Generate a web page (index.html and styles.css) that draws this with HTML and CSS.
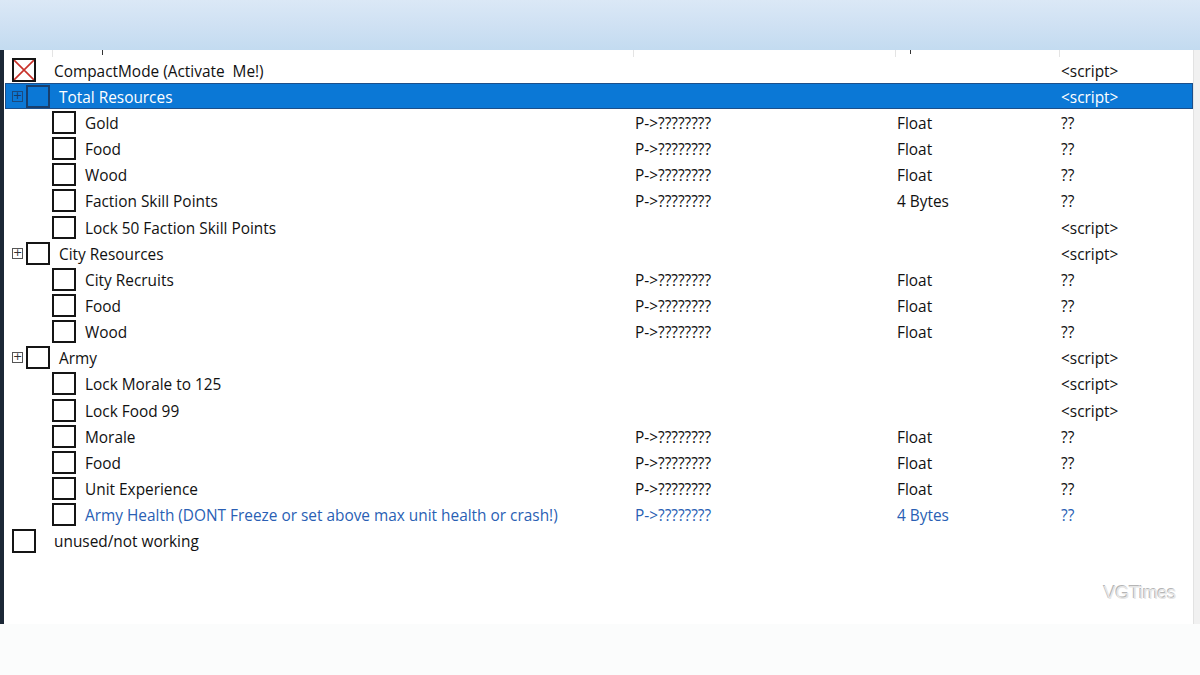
FILE: index.html
```html
<!DOCTYPE html>
<html>
<head>
<meta charset="utf-8">
<link rel="stylesheet" href="styles.css">
</head>
<body>
<div class="top"></div>
<div class="main">
  <div class="edge-left"></div>
  <div class="panel">
    <div class="header">
      <div class="hc c1"><span class="gutter"></span><span class="tick t1"></span></div>
      <div class="hc c2"></div>
      <div class="hc c3"><span class="tick t3"></span></div>
      <div class="hc c4"></div>
    </div>
    <div class="rows">
      <div class="row">
        <div class="c1 top-level"><span class="cb crossed"><svg viewBox="0 0 20 20" preserveAspectRatio="none"><path d="M0 0L20 20M20 0L0 20" stroke="#c8312a" stroke-width="1.6"/></svg></span><span class="label">CompactMode (Activate&nbsp; Me!)</span></div>
        <div class="c2"></div><div class="c3"></div><div class="c4">&lt;script&gt;</div>
      </div>
      <div class="row selected">
        <div class="c1 group"><span class="exp">+</span><span class="cb"></span><span class="label">Total Resources</span></div>
        <div class="c2"></div><div class="c3"></div><div class="c4">&lt;script&gt;</div>
      </div>
      <div class="row">
        <div class="c1 child"><span class="cb"></span><span class="label">Gold</span></div>
        <div class="c2">P-&gt;????????</div><div class="c3">Float</div><div class="c4">??</div>
      </div>
      <div class="row">
        <div class="c1 child"><span class="cb"></span><span class="label">Food</span></div>
        <div class="c2">P-&gt;????????</div><div class="c3">Float</div><div class="c4">??</div>
      </div>
      <div class="row">
        <div class="c1 child"><span class="cb"></span><span class="label">Wood</span></div>
        <div class="c2">P-&gt;????????</div><div class="c3">Float</div><div class="c4">??</div>
      </div>
      <div class="row">
        <div class="c1 child"><span class="cb"></span><span class="label">Faction Skill Points</span></div>
        <div class="c2">P-&gt;????????</div><div class="c3">4 Bytes</div><div class="c4">??</div>
      </div>
      <div class="row">
        <div class="c1 child"><span class="cb"></span><span class="label">Lock 50 Faction Skill Points</span></div>
        <div class="c2"></div><div class="c3"></div><div class="c4">&lt;script&gt;</div>
      </div>
      <div class="row">
        <div class="c1 group"><span class="exp">+</span><span class="cb"></span><span class="label">City Resources</span></div>
        <div class="c2"></div><div class="c3"></div><div class="c4">&lt;script&gt;</div>
      </div>
      <div class="row">
        <div class="c1 child"><span class="cb"></span><span class="label">City Recruits</span></div>
        <div class="c2">P-&gt;????????</div><div class="c3">Float</div><div class="c4">??</div>
      </div>
      <div class="row">
        <div class="c1 child"><span class="cb"></span><span class="label">Food</span></div>
        <div class="c2">P-&gt;????????</div><div class="c3">Float</div><div class="c4">??</div>
      </div>
      <div class="row">
        <div class="c1 child"><span class="cb"></span><span class="label">Wood</span></div>
        <div class="c2">P-&gt;????????</div><div class="c3">Float</div><div class="c4">??</div>
      </div>
      <div class="row">
        <div class="c1 group"><span class="exp">+</span><span class="cb"></span><span class="label">Army</span></div>
        <div class="c2"></div><div class="c3"></div><div class="c4">&lt;script&gt;</div>
      </div>
      <div class="row">
        <div class="c1 child"><span class="cb"></span><span class="label">Lock Morale to 125</span></div>
        <div class="c2"></div><div class="c3"></div><div class="c4">&lt;script&gt;</div>
      </div>
      <div class="row">
        <div class="c1 child"><span class="cb"></span><span class="label">Lock Food 99</span></div>
        <div class="c2"></div><div class="c3"></div><div class="c4">&lt;script&gt;</div>
      </div>
      <div class="row">
        <div class="c1 child"><span class="cb"></span><span class="label">Morale</span></div>
        <div class="c2">P-&gt;????????</div><div class="c3">Float</div><div class="c4">??</div>
      </div>
      <div class="row">
        <div class="c1 child"><span class="cb"></span><span class="label">Food</span></div>
        <div class="c2">P-&gt;????????</div><div class="c3">Float</div><div class="c4">??</div>
      </div>
      <div class="row">
        <div class="c1 child"><span class="cb"></span><span class="label">Unit Experience</span></div>
        <div class="c2">P-&gt;????????</div><div class="c3">Float</div><div class="c4">??</div>
      </div>
      <div class="row blue">
        <div class="c1 child"><span class="cb"></span><span class="label">Army Health (DONT Freeze or set above max unit health or crash!)</span></div>
        <div class="c2">P-&gt;????????</div><div class="c3">4 Bytes</div><div class="c4">??</div>
      </div>
      <div class="row">
        <div class="c1 top-level"><span class="cb"></span><span class="label">unused/not working</span></div>
        <div class="c2"></div><div class="c3"></div><div class="c4"></div>
      </div>
    </div>
    <div class="filler">
      <span class="watermark">VGTimes</span>
    </div>
  </div>
  <div class="edge-right"></div>
</div>
<div class="bottom"></div>
</body>
</html>
```

FILE: styles.css
```css
html, body {
  margin: 0;
  padding: 0;
}
body {
  width: 1200px;
  height: 675px;
  overflow: hidden;
  background: #fbfcfc;
  font-family: "Open Sans", "Noto Sans", "Liberation Sans", sans-serif;
  font-size: 15.4px;
  color: #111;
}
.top {
  height: 50px;
  background: linear-gradient(180deg, #dbe8f6 0%, #cfe1f3 50%, #c3dbf0 100%);
}
.main {
  display: flex;
  height: 574px;
}
.edge-left {
  width: 4px;
  background: #1c2836;
}
.edge-right {
  width: 6px;
  background: #f1f1f1;
  border-left: 1px solid #e2e2e2;
}
.panel {
  flex: 1;
  background: #ffffff;
  display: flex;
  flex-direction: column;
}
.header {
  height: 7px;
  overflow: hidden;
  display: grid;
  grid-template-columns: 629px 262px 164px 1fr;
}
.hc {
  border-left: 1px solid #e4e4e4;
  display: flex;
  align-items: flex-start;
  height: 7px;
}
.hc.c1 {
  border-left: none;
}
.gutter {
  width: 48px;
  height: 7px;
  border-right: 1px solid #e4e4e4;
  flex: none;
}
.tick {
  display: block;
  width: 1px;
  height: 5px;
  background: #333;
  flex: none;
}
.t1 { margin-left: 49px; }
.t3 { margin-left: 14px; height: 4px; }
.rows {
  display: flex;
  flex-direction: column;
}
.row {
  display: grid;
  grid-template-columns: 629px 262px 164px 1fr;
  height: 26.16px;
  align-items: center;
  white-space: nowrap;
  box-sizing: border-box;
}
.row > div {
  padding-left: 2px;
  padding-top: 2px;
}
.row > .c1 {
  padding-left: 0;
  padding-top: 0;
  display: flex;
  align-items: center;
  height: 100%;
}
.label {
  padding-top: 2px;
}
.cb {
  width: 24px;
  height: 23px;
  box-sizing: border-box;
  border: 2px solid #151515;
  background: #fff;
  flex: none;
  display: block;
}
.cb svg {
  display: block;
  width: 100%;
  height: 100%;
}
.top-level .cb {
  margin-left: 8px;
  width: 24px;
  height: 24px;
}
.top-level .label {
  margin-left: 18px;
}
.group .exp {
  margin-left: 8px;
  width: 11px;
  height: 11px;
  box-sizing: border-box;
  border: 1px solid #555;
  font-size: 11px;
  line-height: 8px;
  text-align: center;
  color: #333;
  flex: none;
  font-family: "DejaVu Sans", sans-serif;
}
.group .cb {
  margin-left: 3px;
}
.group .label {
  margin-left: 9px;
}
.child .cb {
  margin-left: 48px;
}
.child .label {
  margin-left: 9px;
}
.row.selected {
  background: #0b78d6;
  color: #fff;
  box-shadow: inset 0 0 0 1px #1d4f8a;
  margin-left: 1px;
  grid-template-columns: 628px 262px 164px 1fr;
}
.row.selected .cb {
  background: #0b78d6;
  border-color: #173f6e;
}
.row.selected .exp {
  border-color: #1a4a80;
  color: #1a3a66;
  margin-left: 7px;
}
.row.blue {
  color: #2a5fb4;
}
.filler {
  flex: 1;
  display: flex;
  justify-content: flex-end;
  align-items: flex-start;
  padding-top: 29px;
  padding-right: 17px;
}
.watermark {
  font-family: "Liberation Sans", sans-serif;
  font-size: 18px;
  color: #e6e6e6;
  text-shadow: -1px -1px 0 #b5b5b5;
  letter-spacing: -0.3px;
}
.bottom {
  height: 51px;
  background: #fbfcfc;
}
```
